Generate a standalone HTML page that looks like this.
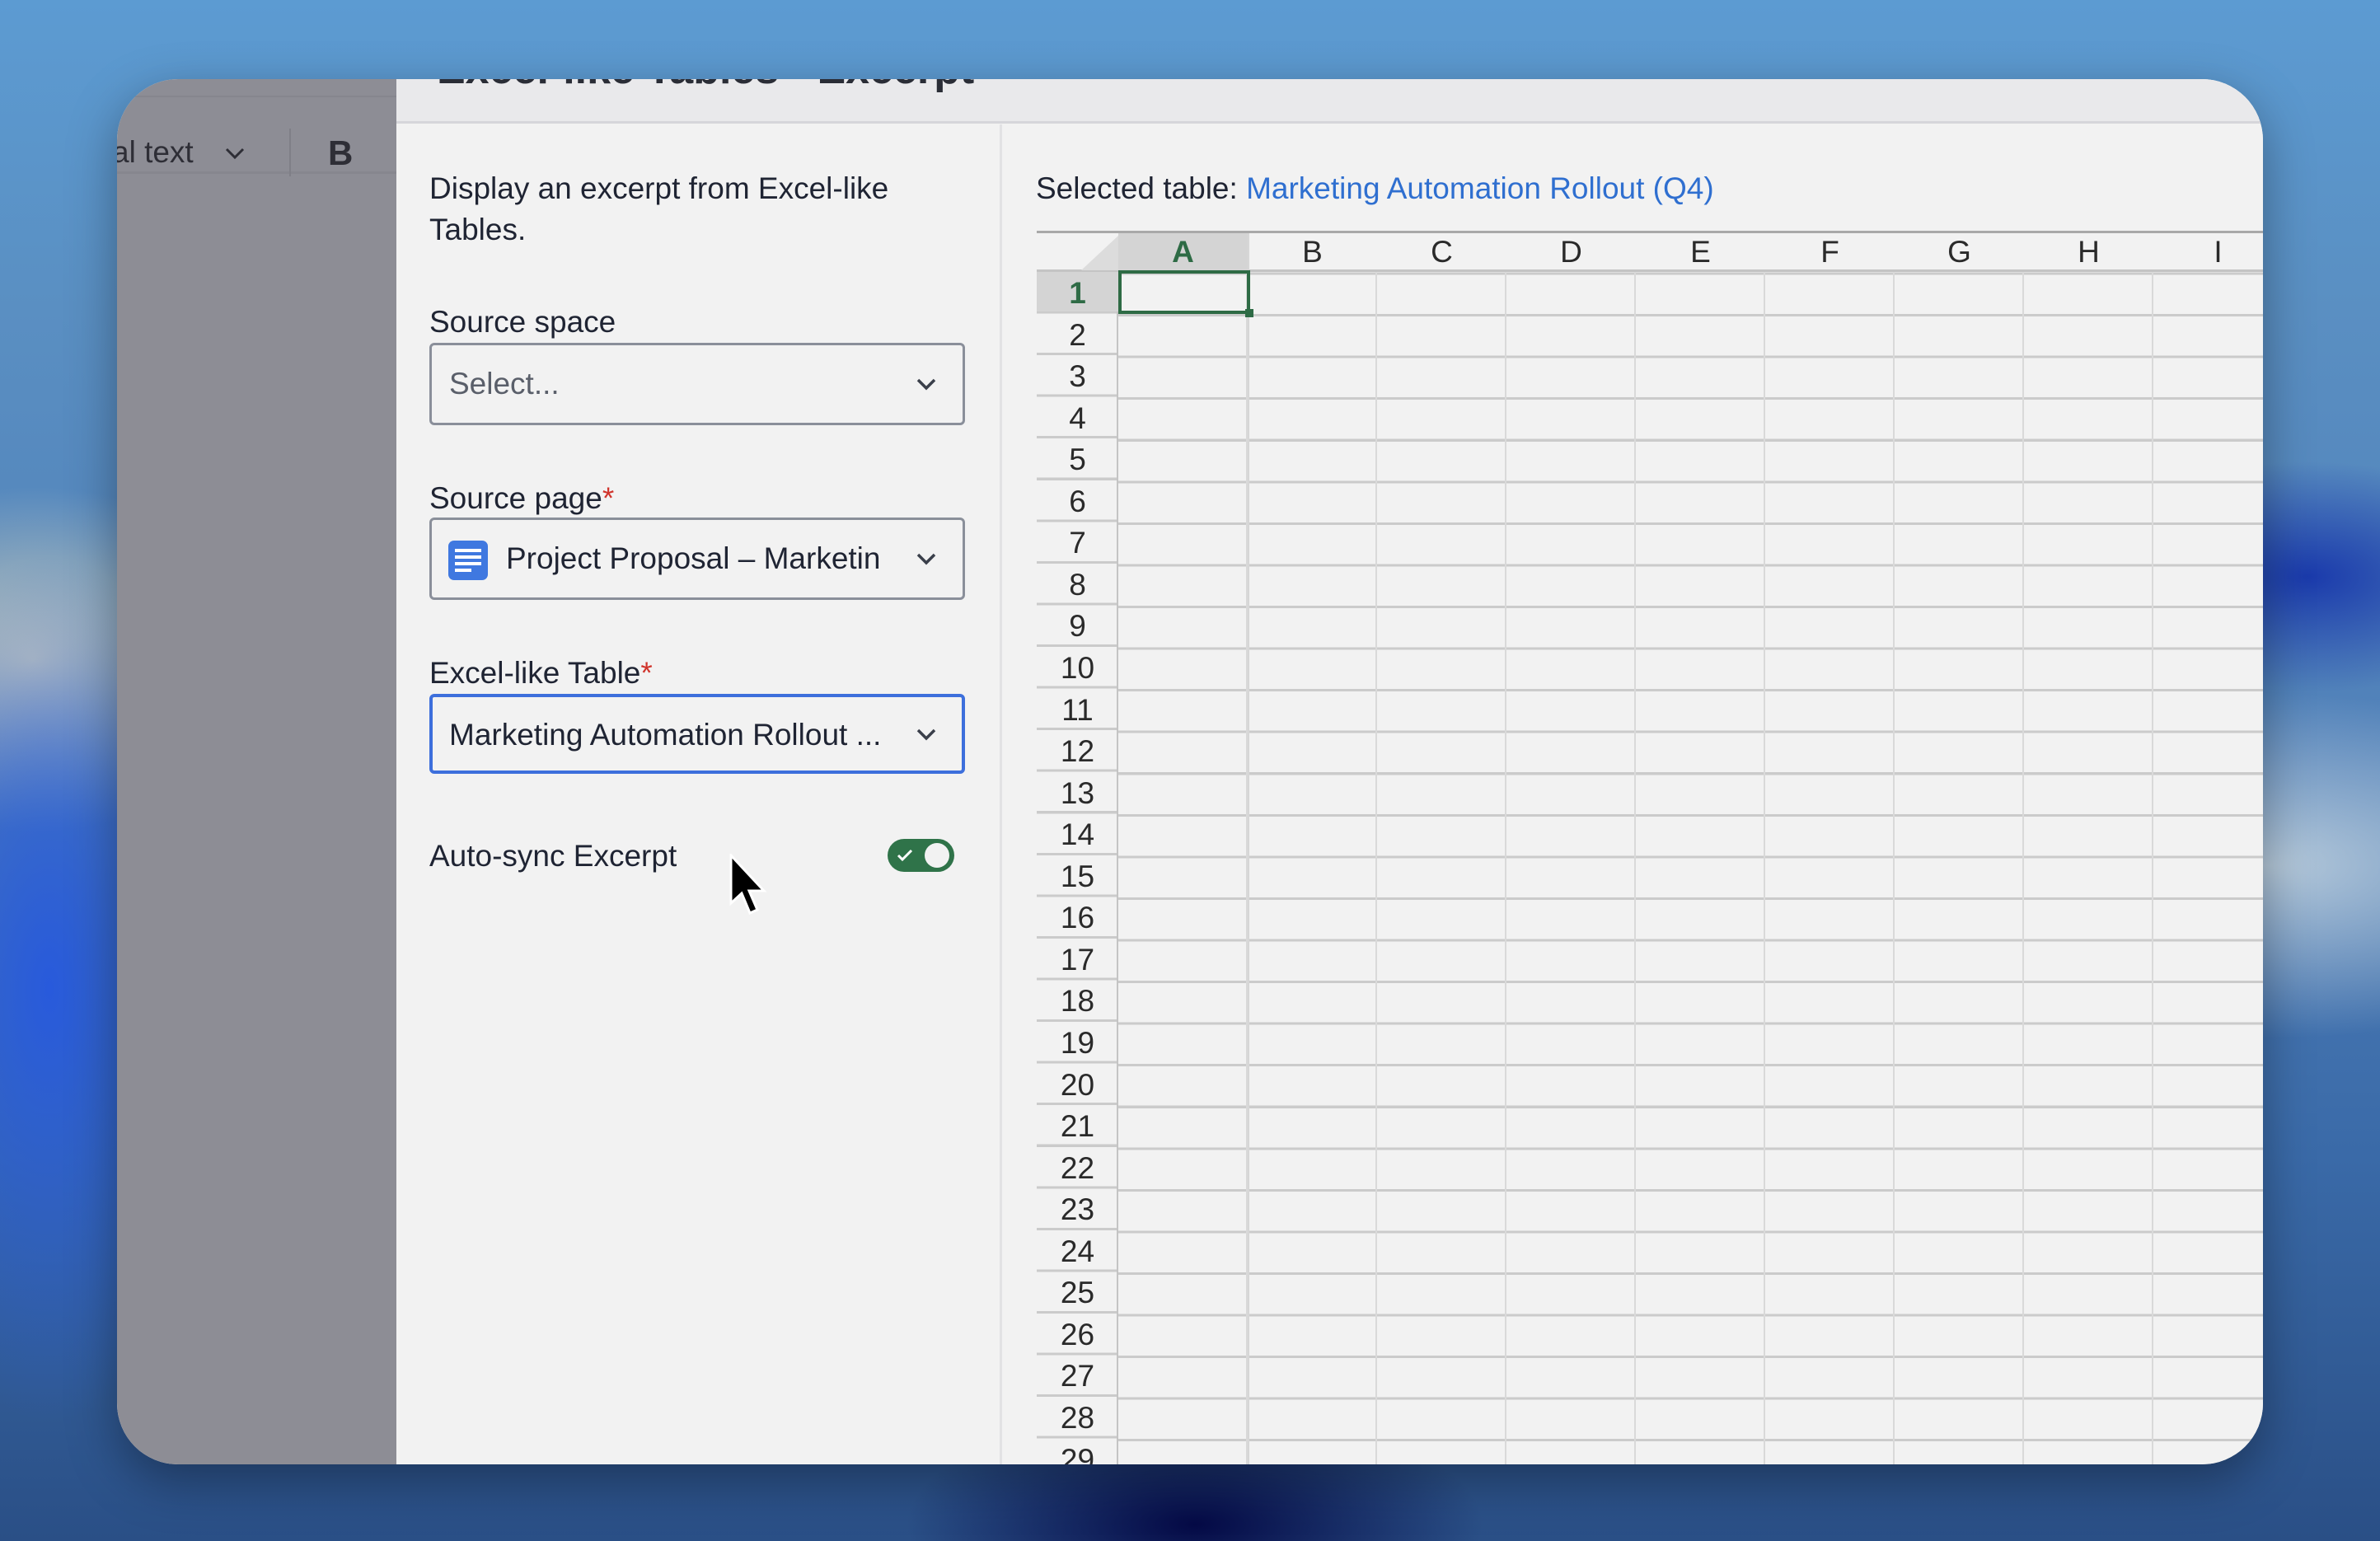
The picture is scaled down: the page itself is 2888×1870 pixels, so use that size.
<!DOCTYPE html>
<html><head><meta charset="utf-8">
<style>
*{margin:0;padding:0;box-sizing:border-box}
body{width:2888px;height:1870px;overflow:hidden;position:relative;font-family:"Liberation Sans",Arial,sans-serif;
background:
radial-gradient(ellipse 700px 300px at 2750px 1050px,rgba(200,215,225,.85),rgba(200,215,225,0) 70%),
radial-gradient(ellipse 400px 200px at 2800px 700px,rgba(20,50,170,.9),rgba(20,50,170,0) 70%),
radial-gradient(ellipse 300px 700px at 60px 1200px,rgba(40,90,220,1),rgba(40,90,220,0) 75%),
radial-gradient(ellipse 400px 300px at 40px 800px,rgba(210,210,190,.9),rgba(210,210,190,0) 70%),
radial-gradient(ellipse 500px 200px at 1450px 1850px,rgba(5,10,70,1),rgba(5,10,70,0) 70%),
linear-gradient(180deg,#5c9bd2 0%,#5a8fc2 20%,#4f7fb8 50%,#3a6aa8 75%,#2a4f86 100%);}
.card{position:absolute;left:142px;top:96px;width:2604px;height:1681px;border-radius:74px;overflow:hidden;background:#f2f2f2;box-shadow:0 20px 60px rgba(0,0,0,.35)}
.abs{position:absolute}
.lbl{position:absolute;left:379px;font-size:37px;color:#1f2433;white-space:nowrap}
.req{color:#d0342c}
.box{position:absolute;left:379px;width:650px;height:100px;border:3px solid #8a8f9a;border-radius:6px;background:#f2f2f2}
.box .t{position:absolute;left:21px;top:0;line-height:94px;font-size:37px;color:#1f2433;white-space:nowrap}
.chev{position:absolute;right:30px;top:38px}
.num{position:absolute;left:1116px;width:99px;text-align:center;font-size:37px;color:#2a2a2a;height:50px;line-height:52px}
.col{position:absolute;top:184px;width:157px;text-align:center;font-size:37px;color:#2a2a2a;line-height:52px}
</style></head><body>
<div class="card">
  <div class="abs" style="left:0;top:0;width:339px;height:1681px;background:#8d8d95"></div>
  <div class="abs" style="left:0;top:20px;width:339px;height:2px;background:#86868e"></div>
  <div class="abs" style="left:0;top:112px;width:339px;height:3px;background:#86868e"></div>
  <div class="abs" style="left:-6px;top:64px;font-size:37px;color:#2e2e36;line-height:50px">al text</div>
  <svg class="abs" style="left:130px;top:82px" width="26" height="16" viewBox="0 0 26 16"><path d="M3 3 L13 13 L23 3" fill="none" stroke="#2e2e36" stroke-width="3"/></svg>
  <div class="abs" style="left:209px;top:60px;width:2px;height:58px;background:#7f7f87"></div>
  <div class="abs" style="left:256px;top:60px;font-size:42px;font-weight:bold;color:#2e2e36;line-height:60px">B</div>
  <div class="abs" style="left:339px;top:0;width:2265px;height:1681px;background:#f2f2f2"></div>
  <div class="abs" style="left:339px;top:0;width:2265px;height:54px;background:#e9e9eb;border-bottom:3px solid #d6d6da"></div>
  <div class="abs" style="left:388px;top:-42px;font-size:52px;font-weight:bold;color:#2a2d36;line-height:60px;white-space:nowrap">Excel-like Tables - Excerpt</div>
  <div class="abs" style="left:1071px;top:55px;width:3px;height:1626px;background:#e2e2e4"></div>
  <div class="lbl" style="top:108px;line-height:50px">Display an excerpt from Excel-like<br>Tables.</div>
  <div class="lbl" style="top:274px">Source space</div>
  <div class="box" style="top:320px"><div class="t" style="color:#5a5f6a">Select...</div>
    <svg class="chev" width="28" height="18" viewBox="0 0 28 18"><path d="M4 4 L14 14 L24 4" fill="none" stroke="#3a3f4a" stroke-width="3.5"/></svg></div>
  <div class="lbl" style="top:488px">Source page<span class="req">*</span></div>
  <div class="box" style="top:532px">
    <svg class="abs" style="left:19px;top:24px" width="50" height="50" viewBox="0 0 50 50"><rect x="1" y="1" width="48" height="48" rx="7" fill="#3f78e0"/><rect x="9" y="11" width="32" height="4" fill="#fff"/><rect x="9" y="19" width="32" height="4" fill="#fff"/><rect x="9" y="27" width="32" height="4" fill="#fff"/><rect x="9" y="35" width="20" height="4" fill="#fff"/></svg>
    <div class="t" style="left:90px;width:455px;overflow:hidden">Project Proposal – Marketing Automation</div>
    <svg class="chev" width="28" height="18" viewBox="0 0 28 18"><path d="M4 4 L14 14 L24 4" fill="none" stroke="#3a3f4a" stroke-width="3.5"/></svg></div>
  <div class="lbl" style="top:700px">Excel-like Table<span class="req">*</span></div>
  <div class="box" style="top:746px;height:97px;border:4px solid #3d6fdc"><div class="t" style="left:20px;line-height:91px">Marketing Automation Rollout ...</div>
    <svg class="chev" style="right:29px;top:36px" width="28" height="18" viewBox="0 0 28 18"><path d="M4 4 L14 14 L24 4" fill="none" stroke="#3a3f4a" stroke-width="3.5"/></svg></div>
  <div class="lbl" style="top:922px">Auto-sync Excerpt</div>
  <div class="abs" style="left:935px;top:922px;width:81px;height:40px;border-radius:20px;background:#2f7349">
    <div class="abs" style="left:45px;top:5px;width:30px;height:30px;border-radius:50%;background:#f2f2f2"></div>
    <svg class="abs" style="left:10px;top:11px" width="22" height="18" viewBox="0 0 22 18"><path d="M3 9 L8 14 L19 3" fill="none" stroke="#fff" stroke-width="3"/></svg></div>
  <div class="abs" style="left:1115px;top:112px;font-size:37px;color:#1f2433;white-space:nowrap">Selected table: <span style="color:#2f6fd0">Marketing Automation Rollout (Q4)</span></div>
  <div class="abs" style="left:1116px;top:184px;width:1500px;height:1500px;border-top:3px solid #a9a9a9;border-left:2px solid #bdbdbd;
   background:
   repeating-linear-gradient(90deg,transparent 0,transparent 155px,#d9d9d9 155px,#d9d9d9 157px) 97px 0/100% 100% no-repeat,
   repeating-linear-gradient(180deg,transparent 0,transparent 47.5px,#cbcbcb 47.5px,#cbcbcb 50.56px) 0 0;"></div>
  <div class="abs" style="left:1116px;top:184px;width:1500px;height:50px;background:#f2f2f2;border-top:3px solid #a9a9a9;border-bottom:3px solid #c4c4c4"></div>
  <div class="abs" style="left:1116px;top:234px;width:99px;height:1500px;background:repeating-linear-gradient(180deg,#f2f2f2 0,#f2f2f2 47.5px,#cbcbcb 47.5px,#cbcbcb 50.56px);border-right:2px solid #c4c4c4"></div>
  <svg class="abs" style="left:1170px;top:190px" width="45" height="42" viewBox="0 0 45 42"><polygon points="45,0 45,42 0,42" fill="#dcdcdc"/></svg>
  <div class="abs" style="left:1215px;top:187px;width:159px;height:47px;background:#d4d4d4"></div>
  <div class="abs" style="left:1116px;top:234px;width:99px;height:48px;background:#d4d4d4"></div>
  <div class="abs" style="left:1372px;top:187px;width:2px;height:1500px;background:#d6d6d6"></div>
  <div class="abs" style="left:1215px;top:232px;width:160px;height:53px;border:4px solid #2e6b45"></div>
  <div class="abs" style="left:1369px;top:279px;width:10px;height:10px;background:#2e6b45"></div>
  <div class="col" style="left:1215px;color:#2e6b45;font-weight:bold">A</div>
  <div class="col" style="left:1372px">B</div>
  <div class="col" style="left:1529px">C</div>
  <div class="col" style="left:1686px">D</div>
  <div class="col" style="left:1843px">E</div>
  <div class="col" style="left:2000px">F</div>
  <div class="col" style="left:2157px">G</div>
  <div class="col" style="left:2314px">H</div>
  <div class="col" style="left:2471px">I</div>
  <div class="num" style="top:234px;color:#2e6b45;font-weight:bold">1</div>
  <div class="num" style="top:285px">2</div><div class="num" style="top:335px">3</div><div class="num" style="top:386px">4</div>
  <div class="num" style="top:436px">5</div><div class="num" style="top:487px">6</div><div class="num" style="top:537px">7</div>
  <div class="num" style="top:588px">8</div><div class="num" style="top:638px">9</div><div class="num" style="top:689px">10</div>
  <div class="num" style="top:740px">11</div><div class="num" style="top:790px">12</div><div class="num" style="top:841px">13</div>
  <div class="num" style="top:891px">14</div><div class="num" style="top:942px">15</div><div class="num" style="top:992px">16</div>
  <div class="num" style="top:1043px">17</div><div class="num" style="top:1093px">18</div><div class="num" style="top:1144px">19</div>
  <div class="num" style="top:1195px">20</div><div class="num" style="top:1245px">21</div><div class="num" style="top:1296px">22</div>
  <div class="num" style="top:1346px">23</div><div class="num" style="top:1397px">24</div><div class="num" style="top:1447px">25</div>
  <div class="num" style="top:1498px">26</div><div class="num" style="top:1548px">27</div><div class="num" style="top:1599px">28</div>
  <div class="num" style="top:1650px">29</div>
  <svg class="abs" style="left:741px;top:940px" width="50" height="80" viewBox="0 0 50 80"><path d="M4 2 L4 60 L17 48 L27 72 L36 68 L26 45 L44 45 Z" fill="#000" stroke="#fff" stroke-width="3"/></svg>
</div>
</body></html>
